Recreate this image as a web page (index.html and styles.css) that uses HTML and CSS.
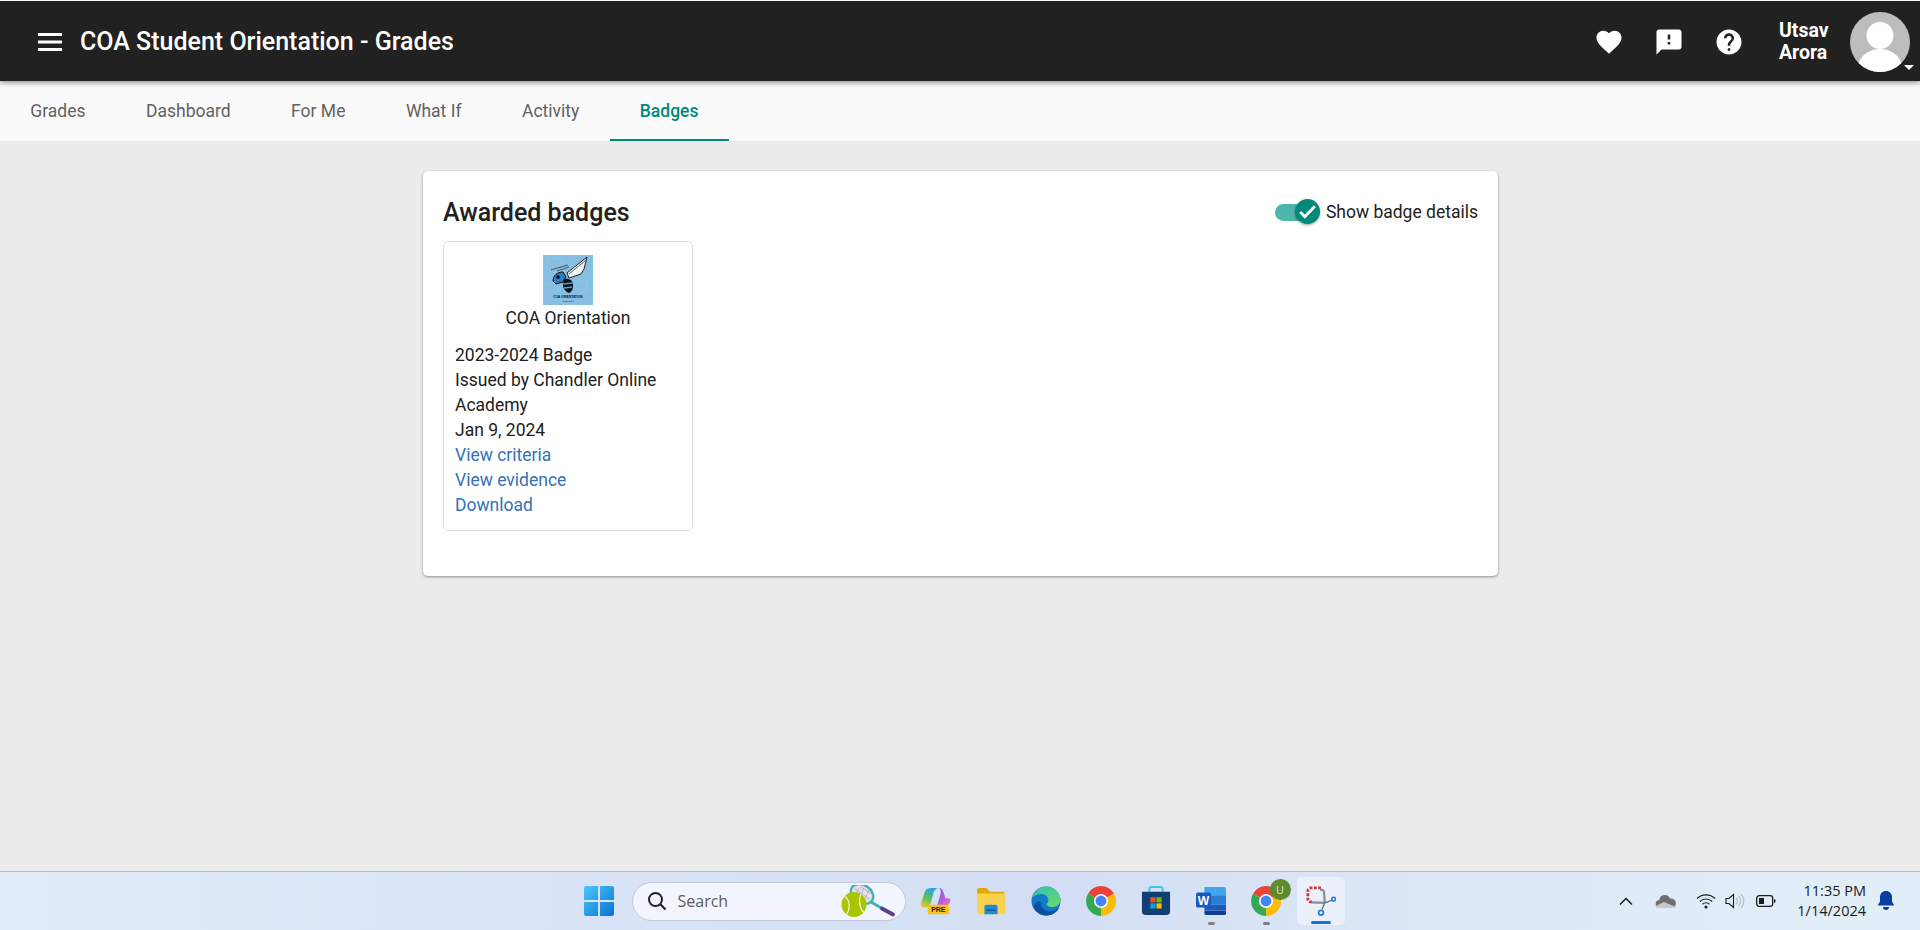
FILE: index.html
```html
<!DOCTYPE html>
<html lang="en">
<head>
    <meta charset="UTF-8">
    <meta name="viewport" content="width=device-width, initial-scale=1.0">
    <title>COA Student Orientation - Grades</title>
    <link rel="stylesheet" href="styles.css">
</head>
<body>
    <div class="page">
        <header class="topbar">
            <svg class="menu-icon" viewBox="0 0 24 24"><path d="M0 3h24v3H0zM0 10.500h24v3H0zM0 18h24v3H0z" fill="#fff"/></svg>
            <h1 class="course-title">COA Student Orientation - Grades</h1>
            <div class="topbar-actions">
                <svg class="action-icon" viewBox="0 0 24 24"><path d="M12 21.350l-1.450-1.320C5.400 15.360 2 12.280 2 8.500 2 5.420 4.420 3 7.500 3c1.740 0 3.410.81 4.500 2.090C13.090 3.810 14.760 3 16.500 3 19.580 3 22 5.420 22 8.500c0 3.780-3.400 6.860-8.550 11.540L12 21.350z" fill="#fff"/></svg>
                <svg class="action-icon" viewBox="0 0 24 24"><path d="M20 2H4c-1.100 0-2 .9-2 2v18l4-4h14c1.100 0 2-.9 2-2V4c0-1.100-.9-2-2-2zm-7 12h-2v-2h2v2zm0-4h-2V6h2v4z" fill="#fff"/></svg>
                <svg class="action-icon" viewBox="0 0 24 24"><path d="M12 2C6.480 2 2 6.480 2 12s4.480 10 10 10 10-4.480 10-10S17.520 2 12 2zm1 17h-2v-2h2v2zm2.070-7.750l-.9.920C13.450 12.900 13 13.500 13 15h-2v-.5c0-1.100.45-2.100 1.170-2.830l1.240-1.260c.37-.36.590-.86.590-1.410 0-1.100-.9-2-2-2s-2 .9-2 2H8c0-2.210 1.790-4 4-4s4 1.790 4 4c0 .88-.36 1.680-.93 2.250z" fill="#fff"/></svg>
            </div>
            <div class="user-name">Utsav<br>Arora</div>
            <div class="avatar-wrap">
                <svg class="avatar" viewBox="0 0 60 60">
                    <defs><clipPath id="avatarClip"><circle cx="30" cy="30" r="30"/></clipPath></defs>
                    <circle cx="30" cy="30" r="30" fill="#bdbdbd"/>
                    <g clip-path="url(#avatarClip)" fill="#fff">
                        <circle cx="30" cy="23.500" r="13.500"/>
                        <ellipse cx="30" cy="56" rx="22" ry="19"/>
                    </g>
                </svg>
                <span class="avatar-caret"></span>
            </div>
        </header>

        <nav class="tabs">
            <a class="tab">Grades</a>
            <a class="tab">Dashboard</a>
            <a class="tab">For Me</a>
            <a class="tab">What If</a>
            <a class="tab">Activity</a>
            <a class="tab tab-active">Badges</a>
        </nav>

        <main class="content">
            <section class="panel">
                <div class="panel-head">
                    <h2 class="panel-title">Awarded badges</h2>
                    <div class="toggle-row">
                        <span class="toggle">
                            <span class="toggle-track"></span>
                            <span class="toggle-thumb">
                                <svg viewBox="0 0 24 24"><path d="M5 12.500l4.500 4.500L19 7" fill="none" stroke="#fff" stroke-width="2.800"/></svg>
                            </span>
                        </span>
                        <span>Show badge details</span>
                    </div>
                </div>
                <article class="badge-card">
                    <div class="badge-top">
                        <svg class="badge-image" viewBox="0 0 50 50">
                            <rect width="50" height="50" fill="#87bfe2"/>
                            <path d="M4 6l8-4 8 4v8l-8 4-8-4zM28 28l8-4 8 4v8l-8 4-8-4zM2 30l7-3 6 3v7" stroke="#93c6e6" fill="none"/>
                            <path d="M24 18L44 2l-3 12-3 5-12 4z" fill="#f4f8fb" stroke="#111" stroke-width=".9"/>
                            <path d="M26 19L43 5" stroke="#333" stroke-width=".8"/>
                            <path d="M8 15l17-5M14 16l12-4" stroke="#222" stroke-width=".7" fill="none"/>
                            <path d="M10 26c0-5 4-9 10-9l3 5-3 5-7 2z" fill="#2b7fc0" stroke="#0c0c0c" stroke-width="1"/>
                            <circle cx="15" cy="22" r="1.800" fill="#0c0c0c"/>
                            <path d="M21 24c5-1 9 1 9 6 0 4-1 7-4 8-3-1-6-4-6-8z" fill="#111"/>
                            <path d="M20.500 29l9.500-1M21 33l8-1" stroke="#4d9fd8" stroke-width="1.300"/>
                            <text class="badge-image-title" x="25" y="43" text-anchor="middle">COA ORIENTATION</text>
                            <text class="badge-image-year" x="25" y="47" text-anchor="middle">2023-2024</text>
                        </svg>
                        <div class="badge-name">COA Orientation</div>
                    </div>
                    <div class="badge-details">
                        <div>2023-2024 Badge</div>
                        <div>Issued by Chandler Online Academy</div>
                        <div>Jan 9, 2024</div>
                        <a class="badge-link">View criteria</a>
                        <a class="badge-link">View evidence</a>
                        <a class="badge-link">Download</a>
                    </div>
                </article>
            </section>
        </main>

        <footer class="taskbar">
            <div class="task-center">
                <svg class="start-icon" viewBox="0 0 30 30">
                    <defs><linearGradient id="winBlue" x1="0" y1="0" x2="1" y2="1"><stop offset="0" stop-color="#4fc6fb"/><stop offset="1" stop-color="#0672d2"/></linearGradient></defs>
                    <path d="M2 0h12v14H0V2a2 2 0 0 1 2-2zM16 0h12a2 2 0 0 1 2 2v12H16zM0 16h14v14H2a2 2 0 0 1-2-2zM16 16h14v12a2 2 0 0 1-2 2H16z" fill="url(#winBlue)"/>
                </svg>
                <div class="searchbox">
                    <svg class="search-icon" viewBox="0 0 20 20"><circle cx="8.500" cy="8.500" r="6.500" fill="none" stroke="#222" stroke-width="2"/><path d="M13.300 13.300L18.500 18.500" stroke="#222" stroke-width="2.200"/></svg>
                    <span class="search-text">Search</span>
                    <svg class="search-art" viewBox="0 0 54 32">
                        <path d="M30 17l12 7" stroke="#3fb0bd" stroke-width="2.800"/>
                        <path d="M41 23.500l11 6" stroke="#5a3f8f" stroke-width="3.800" stroke-linecap="round"/>
                        <ellipse cx="21" cy="9" rx="12" ry="9" transform="rotate(32 21 9)" fill="#e4dfea" stroke="#3fb0bd" stroke-width="2.400"/>
                        <path d="M14 4l14 10M11 8l12 9M20 2l12 8M17 16l6-13M22 17l6-12M13 12l5-9" stroke="#a9a4b4" stroke-width=".7" fill="none"/>
                        <circle cx="13" cy="19.500" r="12.500" fill="#a9c400"/>
                        <path d="M3 11c6 3 7 13 2 19M20 9c-3 6-1 17 4 19" fill="none" stroke="#f3f5d0" stroke-width="1.300"/>
                    </svg>
                </div>
                <div class="task-apps">
                    <div class="task-app">
                        <svg viewBox="0 0 32 32">
                            <defs><linearGradient id="copilotA" x1="0.600" y1="0" x2="0.200" y2="1"><stop offset="0" stop-color="#2a9fe8"/><stop offset=".55" stop-color="#5fc25a"/><stop offset="1" stop-color="#f2c230"/></linearGradient><linearGradient id="copilotB" x1="0" y1="0" x2="1" y2="1"><stop offset="0" stop-color="#5b55e0"/><stop offset=".6" stop-color="#c060d8"/><stop offset="1" stop-color="#f27fb0"/></linearGradient></defs>
                            <path d="M19 2c3 0 4 2 5 5l2 6h3c2 0 3 2 2 4-2 4-5 7-9 7h-9c3-1 4-3 5-6l3-10c.5-3-.5-6-2-6z" fill="url(#copilotB)"/>
                            <path d="M12 2h7c-3 0-4.500 2-5.500 5l-3 11c-1 3-3 5-5 5H3c-3 0-3.500-3-2.500-6L4 6c1-3 4.500-4 8-4z" fill="url(#copilotA)"/>
                            <rect x="7" y="20" width="23" height="10" rx="2" fill="#f8c21c"/>
                            <text class="pre-label" x="18.500" y="28" text-anchor="middle">PRE</text>
                        </svg>
                    </div>
                    <div class="task-app">
                        <svg viewBox="0 0 32 32">
                            <path d="M1 4a2 2 0 0 1 2-2h8l4 4h15v6H1z" fill="#e3a60f"/>
                            <path d="M1 8h30v20a2 2 0 0 1-2 2H3a2 2 0 0 1-2-2z" fill="#fbd24e"/>
                            <path d="M9 22a2 2 0 0 1 2-2h10a2 2 0 0 1 2 2v8H9z" fill="#1f8bd0"/>
                            <rect x="11" y="25" width="10" height="1.500" fill="#0b5a9a"/>
                        </svg>
                    </div>
                    <div class="task-app">
                        <svg viewBox="0 0 32 32">
                            <defs><linearGradient id="edgeA" x1="0" y1="0" x2="1" y2="1"><stop offset="0" stop-color="#2bc0b4"/><stop offset="1" stop-color="#6fdc62"/></linearGradient></defs>
                            <circle cx="16" cy="16" r="15.500" fill="#1478c8"/>
                            <path d="M1 14C3 5 10 .5 16 .5c9 0 15.500 7 15.500 14 0 5-4 8-9 8-3 0-6-1.500-6-3 0-1 2-1.500 2-4 0-4-3-7-7-7-5 0-9 2-11.500 5.500z" fill="url(#edgeA)"/>
                            <path d="M10 17c0 6 5 10 10 10 4 0 7-1 10-4-2 5-7 8.500-14 8.500-6 0-11-4-13-9 1-4 4-7 7-5.500z" fill="#0c4f9e"/>
                        </svg>
                    </div>
                    <div class="task-app">
                        <svg viewBox="0 0 32 32">
                            <path d="M16 16L2.200 8A16 16 0 0 1 29.900 8z" fill="#ea4335"/>
                            <path d="M16 16L29.900 8A16 16 0 0 1 16 32z" fill="#fbbc04"/>
                            <path d="M16 16L16 32A16 16 0 0 1 2.200 8z" fill="#34a853"/>
                            <circle cx="16" cy="16" r="7.500" fill="#fff"/>
                            <circle cx="16" cy="16" r="5.800" fill="#4285f4"/>
                        </svg>
                    </div>
                    <div class="task-app">
                        <svg viewBox="0 0 32 32">
                            <path d="M9 7V3a2 2 0 0 1 2-2h10a2 2 0 0 1 2 2v4" fill="none" stroke="#3cc3ee" stroke-width="2"/>
                            <path d="M2 6h28a1 1 0 0 1 1 1v20a4 4 0 0 1-4 4H5a4 4 0 0 1-4-4V7a1 1 0 0 1 1-1z" fill="#123f73"/>
                            <rect x="10" y="12" width="5.500" height="5.500" fill="#f25022"/>
                            <rect x="16.500" y="12" width="5.500" height="5.500" fill="#7fba00"/>
                            <rect x="10" y="18.500" width="5.500" height="5.500" fill="#00a4ef"/>
                            <rect x="16.500" y="18.500" width="5.500" height="5.500" fill="#ffb900"/>
                        </svg>
                    </div>
                    <div class="task-app task-running">
                        <svg viewBox="0 0 32 32">
                            <path d="M9 1h21a2 2 0 0 1 2 2v7H9z" fill="#41a5ee"/>
                            <rect x="9" y="10" width="23" height="10" fill="#2b7cd3"/>
                            <rect x="9" y="20" width="23" height="6" fill="#185abd"/>
                            <path d="M9 26h23v3a2 2 0 0 1-2 2H11a2 2 0 0 1-2-2z" fill="#103f91"/>
                            <rect y="7" width="16" height="16" rx="2" fill="#185abd"/>
                            <text class="word-label" x="8" y="20" text-anchor="middle">W</text>
                        </svg>
                    </div>
                    <div class="task-app task-running">
                        <svg viewBox="0 0 32 32">
                            <path d="M16 16L2.200 8A16 16 0 0 1 29.900 8z" fill="#ea4335"/>
                            <path d="M16 16L29.900 8A16 16 0 0 1 16 32z" fill="#fbbc04"/>
                            <path d="M16 16L16 32A16 16 0 0 1 2.200 8z" fill="#34a853"/>
                            <circle cx="16" cy="16" r="7.500" fill="#fff"/>
                            <circle cx="16" cy="16" r="5.800" fill="#4285f4"/>
                        </svg>
                        <span class="profile-badge">U</span>
                    </div>
                    <div class="task-app task-active">
                        <svg viewBox="0 0 32 32">
                            <path d="M16 2H5a3 3 0 0 0-3 3v9a3 3 0 0 0 3 3h3" fill="none" stroke="#d13438" stroke-width="3" stroke-dasharray="3 1.600"/>
                            <path d="M15 4h2c1.500 0 2 1 2.200 2.500L20 18M6 17.500l14 .5" fill="none" stroke="#8a8f98" stroke-width="2.400"/>
                            <path d="M20 18l8-3M20 18l-3 7" stroke="#6b7078" stroke-width="1.400"/>
                            <circle cx="16" cy="28.500" r="2.500" fill="none" stroke="#1a86d8" stroke-width="1.900"/>
                            <circle cx="29.500" cy="14" r="2" fill="none" stroke="#1a86d8" stroke-width="1.800"/>
                        </svg>
                    </div>
                </div>
            </div>
            <div class="tray">
                <svg class="tray-chevron" viewBox="0 0 16 10"><path d="M2 8.500l6-6 6 6" fill="none" stroke="#1c1c1c" stroke-width="1.500"/></svg>
                <svg class="tray-cloud" viewBox="0 0 22 16">
                    <path d="M5 15a4 4 0 0 1-.6-8A5.500 5.500 0 0 1 15 5.500 4.500 4.500 0 0 1 17 15z" fill="#6f6f6f"/>
                    <path d="M4 15c-2 0-3-1-3-2l8-4 12 5c-.6.700-2 1-4 1z" fill="#c9c9c9"/>
                </svg>
                <svg class="tray-wifi" viewBox="0 0 20 16"><path d="M1 5.500a13 13 0 0 1 18 0M3.800 8.500a9 9 0 0 1 12.400 0M6.500 11.200a5 5 0 0 1 7 0" fill="none" stroke="#1c1c1c" stroke-width="1.200"/><circle cx="10" cy="14" r="1.500" fill="#1c1c1c"/></svg>
                <svg class="tray-volume" viewBox="0 0 20 16"><path d="M1 5.500h3L8.500 1.500v13L4 10.500H1z" fill="none" stroke="#1c1c1c" stroke-width="1.100"/><path d="M11 5a4 4 0 0 1 0 6M13.500 3a7 7 0 0 1 0 10M16 1a10 10 0 0 1 0 14" fill="none" stroke="#b4b8bc" stroke-width="1.100"/></svg>
                <svg class="tray-battery" viewBox="0 0 20 12"><rect x=".7" y=".7" width="16" height="10.600" rx="2.500" fill="none" stroke="#1c1c1c" stroke-width="1.300"/><rect x="3" y="3" width="5" height="6" fill="#1c1c1c"/><path d="M18 4l1.500 1v2L18 8z" fill="#1c1c1c"/></svg>
                <div class="clock"><div>11:35 PM</div><div>1/14/2024</div></div>
                <svg class="tray-bell" viewBox="0 0 18 20"><path d="M9 0c-3.500 0-6 2.600-6 6v4.500L.8 14.500h16.400L15 10.500V6c0-3.400-2.500-6-6-6z" fill="#0a3fa0"/><path d="M6 16h6a3 3 0 0 1-6 0z" fill="#0a3fa0"/></svg>
            </div>
        </footer>
    </div>
</body>
</html>
```

FILE: styles.css
```css
* {
    box-sizing: border-box;
}

html, body {
    margin: 0;
    padding: 0;
    height: 100%;
    overflow: hidden;
}

body {
    font-family: Roboto, "Liberation Sans", sans-serif;
    font-size: 17.5px;
    color: #212121;
    background-color: #ececec;
}

.page {
    display: flex;
    flex-direction: column;
    height: 100%;
}

/* top bar */

.topbar {
    position: relative;
    z-index: 2;
    display: flex;
    align-items: center;
    height: 81px;
    flex: none;
    padding: 1px 10px 0 38px;
    color: #fff;
    background-color: #212121;
    border-top: 1px solid #fff;
    box-shadow: 0 2px 5px rgba(0, 0, 0, 0.4);
}

.menu-icon {
    width: 24px;
    height: 24px;
}

.course-title {
    margin: 0 0 0 18px;
    font-size: 25px;
    font-weight: 500;
    white-space: nowrap;
}

.topbar-actions {
    display: flex;
    align-items: center;
    gap: 30px;
    margin-left: auto;
}

.action-icon {
    width: 30px;
    height: 30px;
}

.user-name {
    width: 50px;
    margin-left: 35px;
    font-size: 19.500px;
    font-weight: 700;
    line-height: 22px;
}

.avatar-wrap {
    position: relative;
    width: 60px;
    height: 60px;
    margin-left: 21px;
}

.avatar {
    display: block;
    width: 60px;
    height: 60px;
}

.avatar-caret {
    position: absolute;
    right: -4px;
    bottom: 2px;
    border-left: 5px solid transparent;
    border-right: 5px solid transparent;
    border-top: 5px solid #fff;
}

/* tabs */

.tabs {
    display: flex;
    height: 60px;
    flex: none;
    background-color: #fafafa;
}

.tab {
    display: flex;
    align-items: center;
    padding: 1px 30.250px 0;
    color: #616161;
    border-bottom: 2px solid transparent;
}

.tab-active {
    color: #00897b;
    font-weight: 500;
    border-bottom-color: #00897b;
}

/* panel */

.content {
    flex: 1;
    padding-top: 30px;
}

.panel {
    width: 1075px;
    height: 405px;
    margin-left: 423px;
    padding: 26px 20px 20px;
    background-color: #fff;
    border-radius: 5px;
    box-shadow: 0 1px 3px rgba(0, 0, 0, 0.4);
}

.panel-head {
    display: flex;
    justify-content: space-between;
    align-items: center;
    height: 30px;
    margin-bottom: 14px;
}

.panel-title {
    margin: 0;
    font-size: 25px;
    font-weight: 500;
}

.toggle-row {
    display: flex;
    align-items: center;
    gap: 6px;
}

.toggle {
    position: relative;
    width: 45px;
    height: 26px;
}

.toggle-track {
    position: absolute;
    left: 0;
    top: 5px;
    width: 40px;
    height: 17px;
    background-color: #4db6ac;
    border-radius: 9px;
}

.toggle-thumb {
    position: absolute;
    right: 0;
    top: 0;
    width: 25px;
    height: 25px;
    background-color: #00897b;
    border-radius: 50%;
    box-shadow: 0 1px 3px rgba(0, 0, 0, 0.4);
}

.toggle-thumb svg {
    display: block;
    width: 25px;
    height: 25px;
}

.badge-card {
    width: 250px;
    height: 290px;
    padding: 13px 11px;
    line-height: 25px;
    border: 1px solid #dcdcdc;
    border-radius: 5px;
}

.badge-top {
    display: flex;
    flex-direction: column;
    align-items: center;
    margin-bottom: 12px;
}

.badge-name {
    padding-top: 1px;
}

.badge-image {
    display: block;
    width: 50px;
    height: 50px;
}

.badge-image-title {
    font-family: "Liberation Sans", sans-serif;
    font-size: 3.200px;
    font-weight: 700;
    fill: #111;
}

.badge-image-year {
    font-family: "Liberation Sans", sans-serif;
    font-size: 2.400px;
    fill: #222;
}

.badge-link {
    display: block;
    color: #3571b5;
}

/* windows taskbar */

.taskbar {
    display: grid;
    grid-template-columns: 1fr auto 1fr;
    align-items: center;
    height: 59px;
    flex: none;
    background: linear-gradient(90deg, #e0edf8 0%, #d8e4f6 30%, #d3def4 55%, #dce8f6 75%, #e2eef8 100%);
    border-top: 1px solid #b4bccb;
}

.task-center {
    grid-column: 2;
    display: flex;
    align-items: center;
    margin-left: 8px;
}

.start-icon {
    width: 30px;
    height: 30px;
    margin-right: 18px;
}

.searchbox {
    display: flex;
    align-items: center;
    width: 274px;
    height: 39px;
    padding: 0 10px 0 14px;
    background-color: #f2f5fd;
    border: 1px solid #c2c9da;
    border-radius: 20px;
}

.search-icon {
    width: 20px;
    height: 20px;
}

.search-text {
    margin-left: 11px;
    font-family: "Open Sans", sans-serif;
    font-size: 16px;
    color: #5c5c5c;
}

.search-art {
    width: 54px;
    height: 32px;
    margin-left: auto;
}

.task-apps {
    display: flex;
    align-items: center;
    margin-left: 3px;
}

.task-app {
    position: relative;
    display: flex;
    align-items: center;
    justify-content: center;
    width: 55px;
    height: 48px;
}

.task-app svg {
    display: block;
    width: 30px;
    height: 30px;
}

.task-running::after {
    content: "";
    position: absolute;
    bottom: 0;
    left: 24px;
    width: 7px;
    height: 3px;
    background-color: #7c8288;
    border-radius: 2px;
}

.task-active {
    width: 48px;
    margin-left: 3px;
    background-color: #ebf0fa;
    border-radius: 5px;
}

.task-active::after {
    content: "";
    position: absolute;
    bottom: 1px;
    left: 14px;
    width: 20px;
    height: 3px;
    background-color: #0a78d4;
    border-radius: 2px;
}

.pre-label {
    font-family: "Liberation Sans", sans-serif;
    font-size: 7.500px;
    font-weight: 700;
    fill: #222;
}

.word-label {
    font-family: "Liberation Sans", sans-serif;
    font-size: 13px;
    font-weight: 700;
    fill: #fff;
}

.profile-badge {
    position: absolute;
    top: 2px;
    right: 3px;
    width: 21px;
    height: 21px;
    font-family: "Open Sans", sans-serif;
    font-size: 11px;
    line-height: 21px;
    text-align: center;
    color: #dfe8c0;
    background-color: #5f8a2e;
    border-radius: 50%;
}

.tray {
    grid-column: 3;
    display: flex;
    align-items: center;
    justify-content: flex-end;
    padding-right: 25px;
}

.tray-chevron {
    width: 16px;
    height: 10px;
    margin-right: 21px;
}

.tray-cloud {
    width: 22px;
    height: 16px;
    margin-right: 19px;
}

.tray-wifi {
    width: 20px;
    height: 16px;
    margin-right: 9px;
}

.tray-volume {
    width: 20px;
    height: 16px;
    margin-right: 11px;
}

.tray-battery {
    width: 20px;
    height: 12px;
    margin-right: 14px;
}

.clock {
    width: 76px;
    font-family: "Open Sans", sans-serif;
    font-size: 14.500px;
    line-height: 20px;
    text-align: right;
    color: #1c1c1c;
    white-space: nowrap;
}

.tray-bell {
    width: 18px;
    height: 20px;
    margin-left: 11px;
}
```
